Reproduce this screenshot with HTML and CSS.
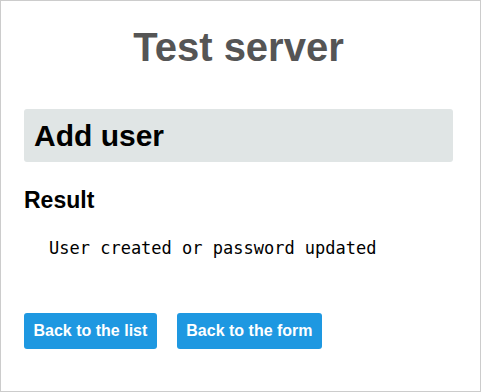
FILE: index.html
```html
<!DOCTYPE html>
<html lang="en">
<head>
    <meta charset="UTF-8">
    <meta name="viewport" content="width=device-width, initial-scale=1.0">
    <title>Test server</title>
    <link rel="stylesheet" href="styles.css">
</head>
<body>
    <div class="page">
        <h1 class="title">Test server</h1>

        <!-- Section header -->
        <div class="section-header">
            <h2>Add user</h2>
        </div>

        <h3 class="result-title">Result</h3>
        <pre class="result-text">User created or password updated</pre>

        <div class="actions">
            <a href="#" class="button">Back to the list</a>
            <a href="#" class="button">Back to the form</a>
        </div>
    </div>
</body>
</html>
```

FILE: styles.css
```css
html, body {
    margin: 0;
    padding: 0;
}
body {
    font-family: "Liberation Sans", Arial, sans-serif;
    background-color: #fff;
}
.page {
    box-sizing: border-box;
    height: 392px;
    border: 1px solid #ccc;
    padding: 23px 27px 0 23px;
}
.title {
    margin: 0;
    color: #555;
    font-size: 40px;
    line-height: 46px;
    font-weight: bold;
    text-align: center;
}
.section-header {
    margin-top: 39px;
    background-color: #e0e5e5;
    border-radius: 3px;
    padding: 9px 10px;
}
.section-header h2 {
    margin: 0;
    font-size: 30px;
    line-height: 35px;
    font-weight: bold;
    color: #000;
}
.result-title {
    margin: 25px 0 0 0;
    font-size: 23px;
    line-height: 26px;
    font-weight: bold;
    color: #000;
}
.result-text {
    margin: 25px 0 0 25px;
    font-family: "DejaVu Sans Mono", monospace;
    font-size: 17px;
    line-height: 20px;
    color: #000;
}
.actions {
    display: flex;
    gap: 20px;
    margin-top: 55px;
}
.button {
    display: inline-block;
    background-color: #1e98e1;
    color: #fff;
    font-size: 16px;
    line-height: 18px;
    font-weight: bold;
    padding: 9px 9.5px;
    border-radius: 3px;
    text-decoration: none;
}
```
